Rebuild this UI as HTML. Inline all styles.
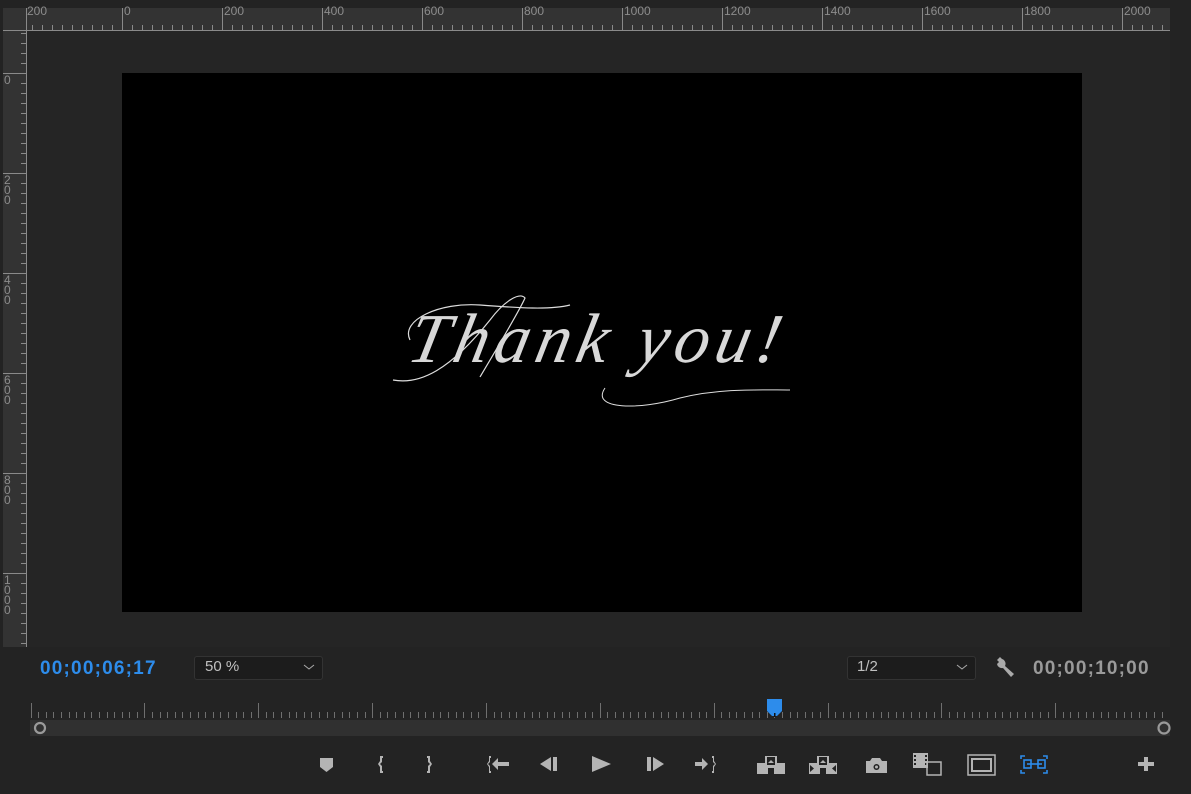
<!DOCTYPE html>
<html><head><meta charset="utf-8"><style>
body{margin:0;width:1191px;height:794px;background:#232323;overflow:hidden;position:relative;font-family:"Liberation Sans",sans-serif}
.a{position:absolute}
.rl{font-size:12px;color:#8c8c8c;position:absolute;top:4px}
.vl{position:absolute;left:4px;font-size:12px;line-height:10px;color:#8c8c8c;width:10px}
</style></head><body>
<div class="a" style="left:3px;top:8px;width:1167px;height:22px;background:#333"></div>
<div class="a" style="left:3px;top:8px;width:23px;height:639px;background:#333"></div>
<div class="a" style="left:26px;top:30px;width:1144px;height:617px;background:#252525"></div>
<div class="a" style="left:0;top:647px;width:1191px;height:147px;background:#232323"></div>
<svg class="a" style="left:0;top:0" width="1191" height="700">
<g stroke="#8a8a8a" stroke-width="1" shape-rendering="crispEdges">
<line x1="3" y1="30.5" x2="1170" y2="30.5"/>
<line x1="26.5" y1="30" x2="26.5" y2="647"/>
<line x1="26.5" y1="8" x2="26.5" y2="30"/>
<g id="h"></g>
</g>
</svg>
<script>
(function(){var g=document.getElementById('h'),s='';
for(var x=32;x<1170;x+=10){var m=((x-122)%100===0);s+='<line x1="'+(x+.5)+'" y1="'+(m?8:25)+'" x2="'+(x+.5)+'" y2="30"/>';}
for(var y=33;y<647;y+=10){var m=((y-73)%100===0);s+='<line x1="'+(m?3:21)+'" y1="'+(y+.5)+'" x2="26" y2="'+(y+.5)+'"/>';}
g.innerHTML=s;
var ls=['200','0','200','400','600','800','1000','1200','1400','1600','1800','2000'];
for(var i=0;i<ls.length;i++){var d=document.createElement('div');d.className='rl';d.style.left=(i==0?27:(22+100*i+2))+'px';d.textContent=ls[i];document.body.appendChild(d);}
var vs=['0','200','400','600','800','1000'];
for(var j=0;j<vs.length;j++){var d=document.createElement('div');d.className='vl';d.style.top=(73+100*j+2)+'px';d.innerHTML=vs[j].split('').join('<br>');document.body.appendChild(d);}
})();
</script>
<div class="a" style="left:122px;top:73px;width:960px;height:539px;background:#000"></div>
<svg class="a" style="left:380px;top:280px" width="440" height="140" fill="none" stroke="#ddd" stroke-width="1.2">
<path d="M13 100 C40 105 70 90 110 40 C125 20 140 12 145 18 C140 30 110 80 100 97"/>
<path d="M30 60 C20 40 60 22 100 25 C140 28 170 30 190 25"/>
<path d="M225 108 C210 130 260 130 300 118 C340 108 380 110 410 110" stroke-width="1"/>
</svg>
<div class="a" style="left:410px;top:300px;font-family:'Liberation Serif',serif;font-style:italic;font-size:70px;color:#d8d8d8;letter-spacing:6px;transform:skewX(-12deg)">Thank you!</div>

<div class="a" style="left:40px;top:658px;font-size:19px;color:#2d8ceb;font-weight:bold;letter-spacing:1.2px">00;00;06;17</div>
<div class="a" style="left:194px;top:656px;width:129px;height:24px;background:#1c1c1c;border:1px solid #333;border-radius:3px;box-sizing:border-box"></div>
<div class="a" style="left:205px;top:658px;font-size:15px;color:#c0c0c0">50 %</div>
<svg class="a" style="left:303px;top:663px" width="12" height="8"><path d="M1 2 L6 6 L11 2" stroke="#aaa" fill="none"/></svg>
<div class="a" style="left:847px;top:656px;width:129px;height:24px;background:#1c1c1c;border:1px solid #333;border-radius:3px;box-sizing:border-box"></div>
<div class="a" style="left:857px;top:658px;font-size:15px;color:#c0c0c0">1/2</div>
<svg class="a" style="left:956px;top:663px" width="12" height="8"><path d="M1 2 L6 6 L11 2" stroke="#aaa" fill="none"/></svg>
<svg class="a" style="left:994px;top:656px" width="24" height="24"><path d="M3 4 L6 1 L8 3 A5 5 0 0 1 11 10 L20 18 L17 21 L9 12 A5 5 0 0 1 3 8 L5 6 Z" fill="#aaa"/></svg>
<div class="a" style="left:1033px;top:658px;font-size:19px;color:#9a9a9a;font-weight:bold;letter-spacing:1.2px">00;00;10;00</div>

<svg class="a" style="left:0;top:695px" width="1191" height="45">
<g id="t" stroke="#6f6f6f" shape-rendering="crispEdges"></g>
<rect x="30" y="25" width="1140" height="16" fill="#303030"/>
<circle cx="40" cy="33" r="5" fill="#303030" stroke="#9a9a9a" stroke-width="2.2"/>
<circle cx="1164" cy="33" r="5.5" fill="#303030" stroke="#9a9a9a" stroke-width="2.2"/>
<path d="M767 4 H782 V16 L777 21 H772 L767 16 Z" fill="#2d8ceb"/>
<rect x="774" y="18" width="1.5" height="4" fill="#111"/>
</svg>
<script>
(function(){var s='';for(var i=0;;i++){var x=30.6+i*7.59;if(x>1166)break;var m=i%15===0;s+='<line x1="'+(Math.round(x)+.5)+'" y1="'+(m?8:17)+'" x2="'+(Math.round(x)+.5)+'" y2="23"/>';}document.getElementById('t').innerHTML=s;})();
</script>

<svg class="a" style="left:0;top:745px" width="1191" height="45" fill="#b4b4b4">
<path d="M320 13 H333 V22 L326.5 27 L320 22 Z"/>
<path d="M380 11 H383 V13 H382 V17 L380 19 L382 21 V26 H383 V28 H380 V22 L378 19 L380 16 Z"/>
<path d="M427 11 H430 V16 L432 19 L430 22 V28 H427 V26 H428 V21 L430 19 L428 17 V13 H427 Z"/>
<path d="M489 11 H491 V13 H490 V17 L488 19 L490 21 V26 H491 V28 H489 V22 L487 19 L489 16 Z"/>
<path d="M492 19 L498 13 V17 H509 V21 H498 V25 Z"/>
<path d="M540 19 L551 12 V26 Z"/><rect x="553" y="12" width="4" height="14"/>
<path d="M592 11 L611 19 L592 27 Z"/>
<rect x="647" y="12" width="4" height="14"/><path d="M653 12 L664 19 L653 26 Z"/>
<path d="M695 17 H702 V13 L708 19 L702 25 V21 H695 Z"/>
<path d="M712 11 H714 V16 L716 19 L714 22 V28 H712 V26 H713 V21 L715 19 L713 17 V13 H712 Z"/>
<path d="M757 18 H765 V11 H777 V18 H785 V29 H774 V23 H768 V29 H757 Z"/>
<rect x="767" y="12" width="8" height="8" fill="#232323"/><path d="M768 18 L771 15 L774 18Z"/>
<path d="M809 18 H817 V11 H829 V18 H837 V29 H826 V23 H820 V29 H809 Z"/>
<rect x="819" y="12" width="8" height="8" fill="#232323"/><path d="M820 18 L823 15 L826 18Z"/>
<path d="M810 20 L814 23.5 L810 27Z M836 20 L832 23.5 L836 27Z" fill="#232323"/>
<path d="M866 16 H870 L872 13 H880 L882 16 H887 V28 H866 Z"/>
<circle cx="876.5" cy="22" r="3" fill="#232323"/><circle cx="876.5" cy="22" r="1.5" fill="#b4b4b4"/>
<rect x="913" y="8" width="15" height="15"/>
<g fill="#232323"><rect x="914" y="10" width="2" height="2"/><rect x="914" y="14" width="2" height="2"/><rect x="914" y="18" width="2" height="2"/><rect x="925" y="10" width="2" height="2"/><rect x="925" y="14" width="2" height="2"/><rect x="925" y="18" width="2" height="2"/></g>
<rect x="927" y="17" width="14" height="13" fill="none" stroke="#b4b4b4" stroke-width="1.5"/>
<rect x="968" y="10" width="27" height="20" fill="none" stroke="#b4b4b4" stroke-width="1.5"/>
<rect x="972" y="14" width="19" height="12" fill="none" stroke="#b4b4b4" stroke-width="2"/>
<g stroke="#2d8ceb" stroke-width="1.6" fill="none">
<path d="M1021 14 V11 H1025 M1043 11 H1047 V14 M1047 25 V28 H1043 M1025 28 H1021 V25"/>
<rect x="1024" y="15" width="7" height="8"/><rect x="1038" y="15" width="7" height="8"/>
<line x1="1027" y1="19" x2="1042" y2="19"/>
</g>
<path d="M1144 12 H1148 V17 H1154 V21 H1148 V26 H1144 V21 H1138 V17 H1144 Z"/>
</svg>
</body></html>
